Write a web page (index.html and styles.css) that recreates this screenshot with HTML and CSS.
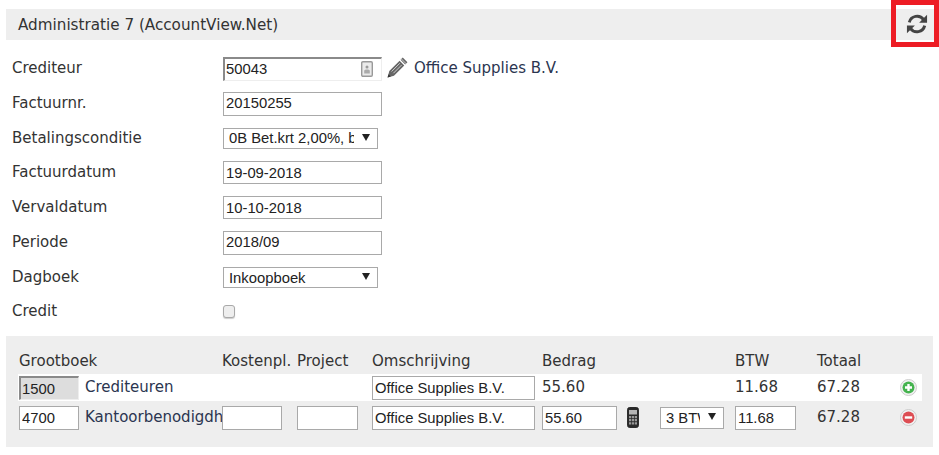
FILE: index.html
```html
<!DOCTYPE html>
<html lang="nl">
<head>
<meta charset="utf-8">
<title>Administratie 7</title>
<link rel="stylesheet" href="styles.css">
</head>
<body>
<header class="title-bar">
  <span class="title">Administratie 7 (AccountView.Net)</span>
  <button class="refresh" type="button" aria-label="Vernieuwen">
    <svg viewBox="0 0 24 24" width="22" height="22"><path class="ic-s" d="M3.600 10.200A8.700 8.700 0 0 1 19.200 7.200"/><path class="ic-f" d="M23 1.800v8.700h-8.700z"/><path class="ic-s" d="M20.400 13.800A8.700 8.700 0 0 1 4.800 16.800"/><path class="ic-f" d="M1 22.200v-8.700h8.700z"/></svg>
  </button>
</header>

<form class="form">
  <div class="row">
    <label>Crediteur</label>
    <div class="ctl">
      <div class="lookup">
        <input class="inp inset wide" value="50043">
        <svg class="card" viewBox="0 0 12 16" width="12" height="16"><rect x=".7" y=".7" width="10.600" height="14.600" rx="1.200" fill="#eaeaea" stroke="#999" stroke-width="1.400"/><circle cx="6" cy="6" r="1.500" fill="#999"/><path d="M3.200 12.500V10c0-1 1-1.500 2.800-1.500s2.800.5 2.800 1.500v2.500z" fill="#aaa"/></svg>
      </div>
      <svg class="pencil" viewBox="0 0 22 22" width="21" height="21"><path fill="#666" d="M16.500.6l4.900 4.900-2.300 2.300-4.900-4.900zM13.200 3.900l4.900 4.900L7.300 19.600l-6.700 1.800L2.400 14.700z"/><path stroke="#ddd" stroke-width=".9" d="M13.500 6.500L4.800 15.200M15.400 8.300L6.700 17M14.800 1.800l5.400 5.400"/><path fill="#333" d="M.6 21.400l1-3.400 2.400 2.400z"/></svg>
      <span class="name">Office Supplies B.V.</span>
    </div>
  </div>
  <div class="row"><label>Factuurnr.</label><div class="ctl"><input class="inp wide" value="20150255"></div></div>
  <div class="row row-short"><label>Betalingsconditie</label><div class="ctl"><div class="sel sel-wide"><select><option>0B Bet.krt 2,00%, bet. 21 dgn</option></select></div></div></div>
  <div class="row"><label>Factuurdatum</label><div class="ctl"><input class="inp wide thin" value="19-09-2018"></div></div>
  <div class="row"><label>Vervaldatum</label><div class="ctl"><input class="inp wide thin" value="10-10-2018"></div></div>
  <div class="row"><label>Periode</label><div class="ctl"><input class="inp wide" value="2018/09"></div></div>
  <div class="row"><label>Dagboek</label><div class="ctl"><div class="sel sel-wide sel-low"><select><option>Inkoopboek</option></select></div></div></div>
  <div class="row row-last"><label>Credit</label><div class="ctl"><input class="check" type="checkbox"></div></div>
</form>

<section class="lines">
  <div class="grid head">
    <span class="span2">Grootboek</span><span>Kostenpl.</span><span>Project</span><span>Omschrijving</span><span class="span2">Bedrag</span><span></span><span>BTW</span><span>Totaal</span><span></span>
  </div>
  <div class="grid line first">
    <input class="inp inset code locked" value="1500"><span class="acct">Crediteuren</span><span></span><span></span>
    <input class="inp desc" value="Office Supplies B.V."><span>55.60</span><span></span><span></span><span>11.68</span><span>67.28</span>
    <svg class="round" viewBox="0 0 17 17" width="17" height="17"><circle cx="8.500" cy="8.500" r="8" fill="#f2f2f2" stroke="#ccc"/><circle cx="8.500" cy="8.500" r="6" fill="#45b34f"/><path d="M7.300 5h2.400v2.300H12v2.400H9.700V12H7.300V9.700H5V7.300h2.300z" fill="#fff"/></svg>
  </div>
  <div class="grid line second">
    <input class="inp code" value="4700"><span class="acct clip">Kantoorbenodigdheden</span><input class="inp small" value=""><input class="inp small" value="">
    <input class="inp desc" value="Office Supplies B.V."><input class="inp amount" value="55.60">
    <svg class="calc" viewBox="0 0 12 21" width="12" height="21"><rect x=".6" y=".6" width="10.800" height="19.800" rx="1.800" fill="#2b2b2b" stroke="#222"/><rect x="2" y="3" width="8" height="4.500" fill="#b5b5b5"/><path d="M2 9h2.200v2.200H2zM4.900 9h2.200v2.200H4.900zM7.800 9H10v2.200H7.800zM2 12.100h2.200v2.200H2zM4.900 12.100h2.200v2.200H4.900zM7.800 12.100H10v2.200H7.800zM2 15.200h2.200v2.200H2zM4.900 15.200h2.200v2.200H4.900zM7.800 15.200H10v2.200H7.800z" fill="#999"/></svg>
    <div class="sel sel-btw"><select><option>3 BTW hoog</option></select></div>
    <input class="inp vat" value="11.68"><span class="total">67.28</span>
    <svg class="round" viewBox="0 0 17 17" width="17" height="17"><circle cx="8.500" cy="8.500" r="8" fill="#f2f2f2" stroke="#ccc"/><circle cx="8.500" cy="8.500" r="6" fill="#dd4d53"/><rect x="4.800" y="7.300" width="7.400" height="2.400" fill="#fff"/></svg>
  </div>
</section>
</body>
</html>
```
FILE: styles.css
```css
* { box-sizing: border-box; }
html, body { margin: 0; background: #fff; }
body {
  padding: 9px 6px 0;
  font-family: "DejaVu Sans", Verdana, sans-serif;
  font-size: 15px;
  color: #333;
  overflow: hidden;
}
.title-bar {
  position: relative;
  display: flex;
  align-items: center;
  height: 31px;
  padding-left: 12px;
  background: #eee;
}
.title { font-size: 15.2px; }
.refresh {
  position: absolute;
  top: -9px;
  right: -6px;
  width: 48px;
  height: 47px;
  padding: 0 0 0 4px;
  display: flex;
  align-items: center;
  justify-content: center;
  background: linear-gradient(#fff 4px, #eee 4px, #eee 35px, #fff 35px);
  border: 5px solid #ed1c24;
}
.ic-s { fill: none; stroke: #444; stroke-width: 3.200; }
.ic-f { fill: #444; }
.form { padding: 17px 0 0 6px; }
.row {
  display: grid;
  grid-template-columns: 211px 1fr;
  height: 35px;
}
.row-short { height: 34px; }
.row label { line-height: 23px; }
.row-last label { line-height: 21px; }
.ctl { display: flex; align-items: flex-start; }
.inp {
  height: 24px;
  padding: 0 2px 2px;
  border: 1px solid #a9a9a9;
  border-radius: 0;
  background: #fff;
  color: #222;
  font: 14.8px "Liberation Sans", Arial, sans-serif;
  outline: 0;
}
.thin { height: 23px; padding-bottom: 0; }
.inset {
  border-width: 2px 1px 1px 2px;
  border-style: solid;
  border-color: #8a8a8a #eee #eee #8a8a8a;
  padding-left: 1px;
}
.wide { width: 159px; }
.lookup { position: relative; width: 159px; }
.card { position: absolute; top: 4px; right: 9px; }
.pencil { margin: 0 0 0 5px; }
.name { margin-left: 6px; line-height: 23px; color: #2b3550; }
.sel { position: relative; background: #fff; }
.sel select {
  appearance: none;
  display: block;
  width: 100%;
  height: 100%;
  border: 1px solid #a9a9a9;
  border-radius: 0;
  background: transparent;
  color: #222;
  font: 14.8px "Liberation Sans", Arial, sans-serif;
  padding: 0 23px 1px 5px;
  outline: 0;
}
.sel-low select { padding-bottom: 0; padding-top: 1px; }
.sel::after {
  content: "";
  position: absolute;
  top: 6px;
  right: 8px;
  border-style: solid;
  border-width: 7px 4px 0;
  border-color: #222 transparent transparent;
  pointer-events: none;
}
.sel-wide { width: 155px; height: 21px; margin-top: 1px; }
.sel-btw { width: 64px; height: 22px; margin-top: 1px; }
.check {
  appearance: none;
  width: 12px;
  height: 13px;
  margin: 4px 0 0;
  border: 1px solid #a9a9a9;
  border-radius: 3px;
  background: #eee;
  box-shadow: 0 1px 1px #ccc;
}
.lines {
  height: 111px;
  padding: 0 11px 0 12px;
  background: #eee;
}
.grid {
  display: grid;
  grid-template-columns: 66px 137px 75px 75px 170px 85px 33px 75px 82px 84px 21px;
  padding-left: 1px;
}
.span2 { grid-column: span 2; }
.head { height: 38px; padding-top: 16px; line-height: 19px; }
.head span:nth-child(5) { grid-column: span 2; }
.line { align-items: start; }
.line .inp { padding-bottom: 0; }
.first { height: 27px; background: #fff; padding-top: 2px; }
.second { height: 29px; padding-top: 5px; }
.first > span, .total { line-height: 23px; }
.second .acct { line-height: 23px; }
.code { width: 60px; }
.locked { background: #ddd; }
.small { width: 60px; }
.small + .small { width: 61px; }
.vat { width: 61px; }
.desc { width: 163px; }
.amount { width: 75px; }
.clip { overflow: hidden; white-space: nowrap; }
.acct { color: #2b3550; }
.calc { margin-top: 1px; }
.round { margin: 3px 0 0 -1px; }
```
